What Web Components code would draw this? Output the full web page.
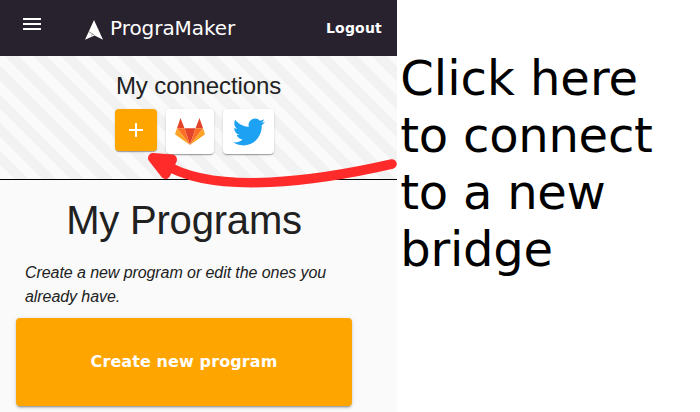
<!DOCTYPE html>
<html lang="en">
<head>
<meta charset="utf-8">
<title>PrograMaker</title>
<style>
html,body{margin:0;background:#fff;height:100%;overflow:hidden}
</style>
</head>
<body>
<tutorial-page></tutorial-page>
<script>
function define(name, html) {
  const template = document.createElement('template');
  template.innerHTML = html;
  customElements.define(name, class extends HTMLElement {
    constructor() {
      super();
      this.attachShadow({mode: 'open'}).append(template.content.cloneNode(true));
    }
  });
}

define('menu-icon', `<style>:host{display:block;width:24px;height:24px}svg{display:block}</style>
<svg width="24" height="24" viewBox="0 0 24 24" fill="#fff"><path d="M3 18h18v-2H3v2zm0-5h18v-2H3v2zm0-7v2h18V6H3z"/></svg>`);

define('brand-logo', `<style>:host{display:block;width:18px;height:20px}svg{display:block}</style>
<svg width="18" height="20" viewBox="0 0 18 20"><path d="M9 0 18 19.700 9.600 15.400 0 19.700Z" fill="#fff"/><path d="M4 11.800 9.200 15M7.400 14.200 6.400 15.800" stroke="#28222e" stroke-opacity=".8" stroke-width=".6" fill="none"/></svg>`);

define('app-bar', `<style>
:host{display:flex;box-sizing:border-box;height:56px;padding:0 15px 0 20px;background:#28222e;color:#fff;font-family:"DejaVu Sans",sans-serif}
menu-icon{margin-top:12px}
.brand{display:flex;margin-left:41px}
brand-logo{margin-top:20px}
.name{font-size:20px;line-height:56px;margin-left:7px;letter-spacing:-.05px}
.logout{margin-left:auto;font-weight:700;font-size:14px;line-height:56px;letter-spacing:.2px}
</style><menu-icon></menu-icon><div class="brand"><brand-logo></brand-logo><span class="name">PrograMaker</span></div><span class="logout"><slot></slot></span>`);

define('connection-tile', `<style>
:host{display:flex;align-items:center;justify-content:center;box-sizing:border-box;width:48px;height:45px;border-radius:4px;background:#fff;box-shadow:0 2px 1px -1px rgba(0,0,0,.2),0 1px 1px rgba(0,0,0,.14),0 1px 3px rgba(0,0,0,.12)}
:host([kind=add]){width:42px;height:42px;background:#ffa500}
:host([kind=wide]){width:51px}
</style><slot></slot>`);

define('plus-icon', `<style>:host,svg{display:block}</style>
<svg width="24" height="24" viewBox="0 0 24 24"><path d="M19 13h-6v6h-2v-6H5v-2h6V5h2v6h6v2z" fill="#fff"/></svg>`);

define('gitlab-icon', `<style>:host,svg{display:block}</style>
<svg width="30" height="28" viewBox="0 0 30 28"><path fill="#e24329" d="M15 27 9.5 10.2h11zM5.500 0 9.500 10.2H2zM24.500 0 28 10.2h-7.500z"/><path fill="#fc6d26" d="M15 27 9.5 10.2H2zM15 27l5.5-16.8H28z"/><path fill="#fca326" d="M2 10.2.2 15.4c-.2.5 0 1 .4 1.3L15 27zM28 10.2l1.8 5.2c.2.5 0 1-.4 1.3L15 27z"/></svg>`);

define('twitter-icon', `<style>:host,svg{display:block}</style>
<svg width="32" height="28" viewBox="0 1.8 24 20.4" preserveAspectRatio="none"><path fill="#1da1f2" d="M23.954 4.569c-.885.389-1.83.654-2.825.775 1.014-.611 1.794-1.574 2.163-2.723-.951.555-2.005.959-3.127 1.184-.896-.959-2.173-1.559-3.591-1.559-2.717 0-4.92 2.203-4.92 4.917 0 .39.045.765.127 1.124C7.691 8.094 4.066 6.13 1.64 3.161c-.427.722-.666 1.561-.666 2.475 0 1.71.87 3.213 2.188 4.096-.807-.026-1.566-.248-2.228-.616v.061c0 2.385 1.693 4.374 3.946 4.827-.413.111-.849.171-1.296.171-.314 0-.615-.03-.916-.086.631 1.953 2.445 3.377 4.604 3.417-1.68 1.319-3.809 2.105-6.102 2.105-.39 0-.779-.023-1.17-.067 2.189 1.394 4.768 2.209 7.557 2.209 9.054 0 13.999-7.496 13.999-13.986 0-.209 0-.42-.015-.63.961-.689 1.8-1.56 2.46-2.548z"/></svg>`);

define('connections-panel', `<style>
:host{display:block;box-sizing:border-box;height:124px;padding-top:14px;border-bottom:1px solid #000;background:repeating-linear-gradient(45deg,#fafafa,#fafafa 10px,#f2f2f2 10px,#f2f2f2 20px);font-family:"Liberation Sans",sans-serif;color:#212121}
h2{margin:0;font-size:24px;line-height:32px;font-weight:400;text-align:center;letter-spacing:-.12px}
.tiles{display:flex;margin:7px 0 0 115px;align-items:flex-start;gap:9px}
</style><h2>My connections</h2><div class="tiles"><connection-tile kind="add"><plus-icon></plus-icon></connection-tile><connection-tile><gitlab-icon></gitlab-icon></connection-tile><connection-tile kind="wide"><twitter-icon></twitter-icon></connection-tile></div>`);

define('create-button', `<style>
:host{display:flex;align-items:center;justify-content:center;width:336px;height:88px;border-radius:4px;background:#ffa500;color:#fff;font:700 16px "DejaVu Sans",sans-serif;letter-spacing:.1px;box-shadow:0 3px 1px -2px rgba(0,0,0,.2),0 2px 2px rgba(0,0,0,.14),0 1px 5px rgba(0,0,0,.12)}
span{padding-bottom:2px}
</style><span><slot></slot></span>`);

define('programs-panel', `<style>
:host{display:block;box-sizing:border-box;padding:12px 16px 0;font-family:"Liberation Sans",sans-serif;color:#212121}
h1{margin:0;width:336px;text-align:center;font-size:40px;line-height:56px;font-weight:400;letter-spacing:-.2px}
p{margin:13px 0 9px 9px;width:320px;font-size:16px;line-height:24px;font-style:italic;letter-spacing:-.075px}
</style><h1>My Programs</h1><p>Create a new program or edit the ones you already have.</p><create-button>Create new program</create-button>`);

define('callout-arrow', `<style>:host{display:block;position:absolute;left:140px;top:145px;width:260px;height:50px}svg{display:block}</style>
<svg width="260" height="50" viewBox="140 145 260 50" fill="#ff2a2a" stroke="#ff2a2a" stroke-linecap="round" stroke-linejoin="round"><path d="M392 164C320 180.500 215 196 164 164" fill="none" stroke-width="9.500"/><path d="M153 158 172 159.500 165.500 174Z" stroke-width="10"/></svg>`);

define('app-window', `<style>:host{display:block;width:397px;height:412px;overflow:hidden;background:#fafafa}</style>
<app-bar>Logout</app-bar><connections-panel></connections-panel><programs-panel></programs-panel>`);

define('callout-text', `<style>:host{display:block;padding:50px 0 0 3.3px;font:48px/57px "DejaVu Sans",sans-serif;letter-spacing:-.25px;color:#000;white-space:nowrap}:host::first-line{letter-spacing:0}</style><slot></slot>`);

define('tutorial-page', `<style>:host{display:grid;grid-template-columns:397px 1fr;height:412px;position:relative;overflow:hidden}</style>
<app-window></app-window><callout-text>Click here<br>to connect<br>to a new<br>bridge</callout-text><callout-arrow></callout-arrow>`);
</script>
</body>
</html>
